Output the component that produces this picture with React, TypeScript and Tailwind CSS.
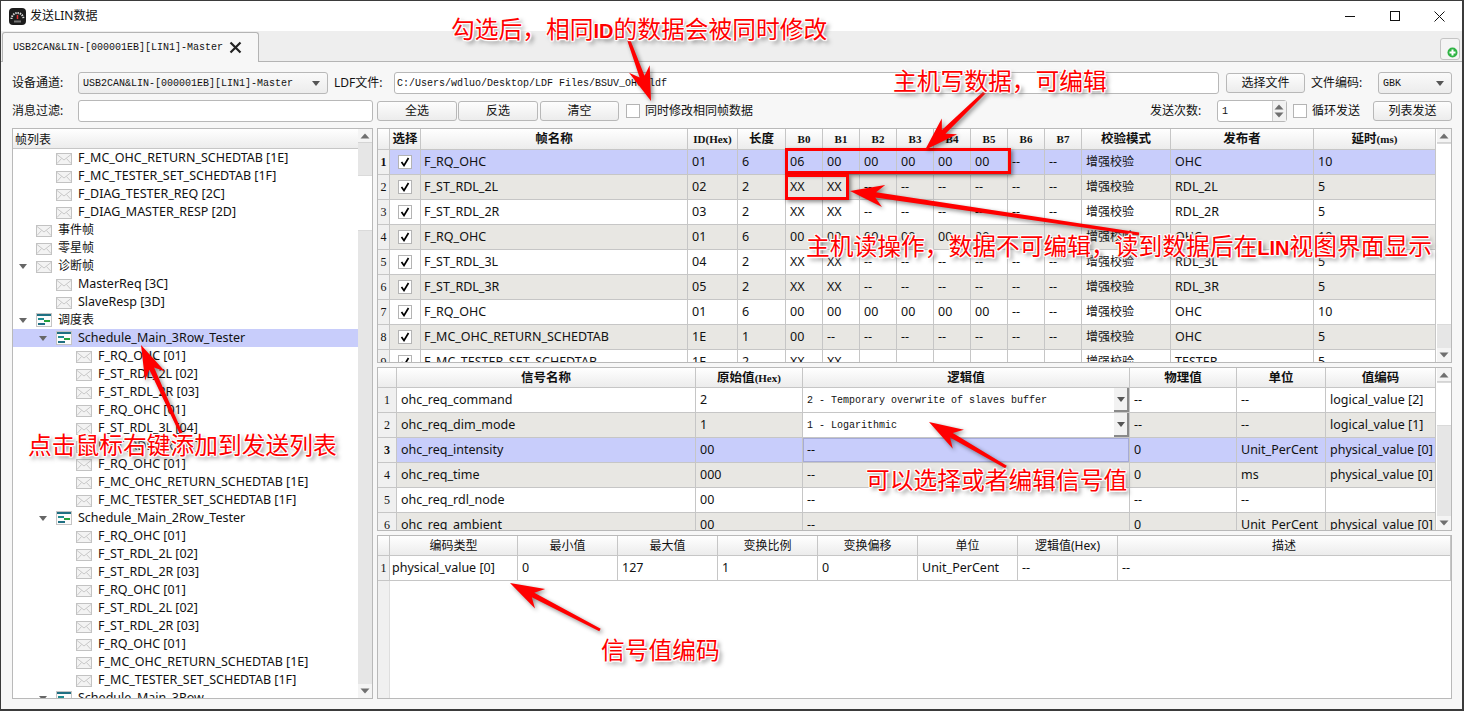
import React from "react";

const UI_FONT = "font-['Noto_Sans','Noto_Sans_CJK_SC',sans-serif]";
const MONO = "font-['Liberation_Mono','Noto_Sans_CJK_SC',monospace] text-[10px]";

type TreeRow = { level: number; icon: "mail" | "sched"; text: string; open?: boolean; selected?: boolean; cjk?: boolean };

const m = (level: number, text: string): TreeRow => ({ level, icon: "mail", text });

const TREE: TreeRow[] = [
  m(2, "F_MC_OHC_RETURN_SCHEDTAB [1E]"),
  m(2, "F_MC_TESTER_SET_SCHEDTAB [1F]"),
  m(2, "F_DIAG_TESTER_REQ [2C]"),
  m(2, "F_DIAG_MASTER_RESP [2D]"),
  { level: 1, icon: "mail", text: "事件帧", cjk: true },
  { level: 1, icon: "mail", text: "零星帧", cjk: true },
  { level: 1, icon: "mail", text: "诊断帧", open: true, cjk: true },
  m(2, "MasterReq [3C]"),
  m(2, "SlaveResp [3D]"),
  { level: 1, icon: "sched", text: "调度表", open: true, cjk: true },
  { level: 2, icon: "sched", text: "Schedule_Main_3Row_Tester", open: true, selected: true },
  m(3, "F_RQ_OHC [01]"),
  m(3, "F_ST_RDL_2L [02]"),
  m(3, "F_ST_RDL_2R [03]"),
  m(3, "F_RQ_OHC [01]"),
  m(3, "F_ST_RDL_3L [04]"),
  m(3, "F_ST_RDL_3R [05]"),
  m(3, "F_RQ_OHC [01]"),
  m(3, "F_MC_OHC_RETURN_SCHEDTAB [1E]"),
  m(3, "F_MC_TESTER_SET_SCHEDTAB [1F]"),
  { level: 2, icon: "sched", text: "Schedule_Main_2Row_Tester", open: true },
  m(3, "F_RQ_OHC [01]"),
  m(3, "F_ST_RDL_2L [02]"),
  m(3, "F_ST_RDL_2R [03]"),
  m(3, "F_RQ_OHC [01]"),
  m(3, "F_ST_RDL_2L [02]"),
  m(3, "F_ST_RDL_2R [03]"),
  m(3, "F_RQ_OHC [01]"),
  m(3, "F_MC_OHC_RETURN_SCHEDTAB [1E]"),
  m(3, "F_MC_TESTER_SET_SCHEDTAB [1F]"),
  { level: 2, icon: "sched", text: "Schedule_Main_3Row", open: true },
];

const LEVEL_PAD: Record<number, string> = { 1: "pl-[6px]", 2: "pl-[26px]", 3: "pl-[46px]" };

const FRAMES = [
  ["F_RQ_OHC", "01", "6", "06", "00", "00", "00", "00", "00", "--", "--", "OHC", "10"],
  ["F_ST_RDL_2L", "02", "2", "XX", "XX", "--", "--", "--", "--", "--", "--", "RDL_2L", "5"],
  ["F_ST_RDL_2R", "03", "2", "XX", "XX", "--", "--", "--", "--", "--", "--", "RDL_2R", "5"],
  ["F_RQ_OHC", "01", "6", "00", "00", "00", "00", "00", "00", "--", "--", "OHC", "10"],
  ["F_ST_RDL_3L", "04", "2", "XX", "XX", "--", "--", "--", "--", "--", "--", "RDL_3L", "5"],
  ["F_ST_RDL_3R", "05", "2", "XX", "XX", "--", "--", "--", "--", "--", "--", "RDL_3R", "5"],
  ["F_RQ_OHC", "01", "6", "00", "00", "00", "00", "00", "00", "--", "--", "OHC", "10"],
  ["F_MC_OHC_RETURN_SCHEDTAB", "1E", "1", "00", "--", "--", "--", "--", "--", "--", "--", "OHC", "5"],
  ["F_MC_TESTER_SET_SCHEDTAB", "1F", "2", "XX", "XX", "--", "--", "--", "--", "--", "--", "TESTER", "5"],
];

const SIGNALS = [
  ["ohc_req_command", "2", "2 - Temporary overwrite of slaves buffer", "--", "--", "logical_value [2]"],
  ["ohc_req_dim_mode", "1", "1 - Logarithmic", "--", "--", "logical_value [1]"],
  ["ohc_req_intensity", "00", "--", "0", "Unit_PerCent", "physical_value [0]"],
  ["ohc_req_time", "000", "--", "0", "ms", "physical_value [0]"],
  ["ohc_req_rdl_node", "00", "--", "--", "--", ""],
  ["ohc_req_ambient", "00", "--", "0", "Unit_PerCent", "physical_value [0]"],
];

const FRAME_COLS = "grid grid-cols-[12px_31px_267px_50px_48px_repeat(8,37px)_89px_143px_122px]";
const SIGNAL_COLS = "grid grid-cols-[19px_299px_107px_327px_107px_89px_110px]";
const CODE_COLS = "grid grid-cols-[12px_128px_100px_100px_100px_100px_100px_100px_333px]";

function rowBg(i: number, selected: boolean) {
  if (selected) return "bg-[#c8cdfb]";
  return i % 2 === 0 ? "bg-white" : "bg-[#e8e7e3]";
}

function Cell({ className = "", children }: { className?: string; children?: React.ReactNode }) {
  return (
    <div className={`flex items-center overflow-hidden whitespace-nowrap border-r border-b border-[#c6c6c6] pl-[4px] ${className}`}>
      {children}
    </div>
  );
}

function Head({ className = "", children }: { className?: string; children?: React.ReactNode }) {
  return (
    <div className={`flex items-center justify-center overflow-hidden whitespace-nowrap border-r border-b border-[#c6c6c6] bg-gradient-to-b from-white to-[#ececec] ${className}`}>
      {children}
    </div>
  );
}

function RowNum({ n, bold }: { n: number; bold?: boolean }) {
  return (
    <div className={`flex items-center justify-center border-r border-b border-[#c6c6c6] bg-[#f0f0f0] font-['Liberation_Serif',serif] text-[12px] ${bold ? "font-bold" : ""}`}>
      {n}
    </div>
  );
}

function Triangle({ dir }: { dir: "up" | "down" }) {
  return (
    <svg width="10" height="6" viewBox="0 0 10 6">
      <path d={dir === "up" ? "M5 0.5 9.5 5.5H0.5Z" : "M0.5 0.5H9.5L5 5.5Z"} fill="#6f6f6f" />
    </svg>
  );
}

function ScrollBar({ before, thumb }: { before: string; thumb: string }) {
  return (
    <div className="flex w-[14px] flex-none flex-col bg-[#e6e6e6]">
      <div className="flex h-[14px] flex-none items-center justify-center border-b border-[#d4d4d4] bg-[#f4f4f4]">
        <Triangle dir="up" />
      </div>
      <div className={`flex-none ${before}`} />
      <div className={`flex-none border-y border-[#dadada] bg-white ${thumb}`} />
      <div className="flex-1" />
      <div className="flex h-[14px] flex-none items-center justify-center bg-[#f4f4f4]">
        <Triangle dir="down" />
      </div>
    </div>
  );
}

function MailIcon() {
  return (
    <svg width="16" height="12" viewBox="0 0 16 12" className="mt-[2px] flex-none">
      <rect x="0.5" y="0.5" width="15" height="11" fill="#f3f3f3" stroke="#c2c2c2" />
      <path d="M1 1.5 8 7 15 1.5M1 10.5 5.5 5.5M15 10.5 10.5 5.5" fill="none" stroke="#c9c9c9" />
    </svg>
  );
}

function SchedIcon() {
  return (
    <svg width="16" height="14" viewBox="0 0 16 14" className="flex-none">
      <rect x="0.5" y="0.5" width="15" height="13" fill="#fbfbfb" stroke="#c4c4c4" />
      <rect x="1" y="1" width="14" height="2" fill="#1f6f82" />
      <rect x="2" y="5" width="6" height="2" fill="#1f8a8f" />
      <rect x="8" y="7" width="6" height="2" fill="#26a03c" />
      <rect x="2" y="10" width="7" height="2" fill="#1f6f82" />
    </svg>
  );
}

function TreeItem({ row }: { row: TreeRow }) {
  return (
    <div className={`flex h-[18px] flex-none items-center whitespace-nowrap ${LEVEL_PAD[row.level]} ${row.selected ? "bg-[#c8cdfb]" : ""}`}>
      <div className="flex w-[17px] flex-none items-center">
        {row.open && (
          <svg width="8" height="5" viewBox="0 0 8 5">
            <path d="M0 0H8L4 5Z" fill="#666" />
          </svg>
        )}
      </div>
      {row.icon === "mail" ? <MailIcon /> : <SchedIcon />}
      <span className={`ml-[6px] ${row.cjk ? "text-[12px]" : ""}`}>{row.text}</span>
    </div>
  );
}

function Btn({ className = "", children }: { className?: string; children: React.ReactNode }) {
  return (
    <div className={`flex h-[20px] flex-none items-center justify-center rounded-[3px] border border-[#b8b8b8] bg-gradient-to-b from-[#fdfdfd] to-[#ececec] text-[12px] ${className}`}>
      {children}
    </div>
  );
}

function Combo({ className = "", children }: { className?: string; children: React.ReactNode }) {
  return (
    <div className={`flex h-[22px] flex-none items-center justify-between rounded-[3px] border border-[#b8b8b8] bg-gradient-to-b from-[#fafafa] to-[#ececec] pl-[4px] pr-[7px] ${MONO} ${className}`}>
      <span>{children}</span>
      <svg width="8" height="5" viewBox="0 0 8 5">
        <path d="M0 0H8L4 5Z" fill="#555" />
      </svg>
    </div>
  );
}

function CheckBox({ checked }: { checked?: boolean }) {
  return (
    <div className="flex h-[14px] w-[14px] flex-none items-center justify-center border border-[#b4b4b4] bg-white">
      {checked && (
        <svg width="10" height="10" viewBox="0 0 10 10">
          <path d="M1.5 5 4 8.5 8.5 1" fill="none" stroke="#000" strokeWidth="1.7" />
        </svg>
      )}
    </div>
  );
}

function ComboCell({ text }: { text: string }) {
  return (
    <div className={`flex items-center justify-between border-r border-b border-[#c6c6c6] bg-white pl-[4px] ${MONO}`}>
      <span className="whitespace-nowrap">{text}</span>
      <div className="flex h-full w-[15px] flex-none items-center justify-center border-b-2 border-r-2 border-[#8a8a8a] bg-[#f2f2f2]">
        <svg width="8" height="5" viewBox="0 0 8 5">
          <path d="M0 0H8L4 5Z" fill="#555" />
        </svg>
      </div>
    </div>
  );
}

function FrameTable() {
  const headB = "font-['Liberation_Serif',serif] text-[11px] font-bold";
  const headC = "pt-[1px] text-[12.5px] font-bold";
  return (
    <div className="flex h-[235px] flex-none border border-[#b9b9b9] bg-white">
      <div className="w-[1058px] flex-none overflow-hidden">
        <div className={`${FRAME_COLS} h-[21px]`}>
          <Head />
          <Head className={headC}>选择</Head>
          <Head className={headC}>帧名称</Head>
          <Head className={headC}>
            <span className={headB}>ID(Hex)</span>
          </Head>
          <Head className={headC}>长度</Head>
          {["B0", "B1", "B2", "B3", "B4", "B5", "B6", "B7"].map((b) => (
            <Head key={b} className={headB}>
              {b}
            </Head>
          ))}
          <Head className={headC}>校验模式</Head>
          <Head className={headC}>发布者</Head>
          <Head className={headC}>
            延时<span className={headB}>(ms)</span>
          </Head>
        </div>
        {FRAMES.map((row, i) => {
          const bg = rowBg(i, i === 0);
          return (
            <div key={i} className={`${FRAME_COLS} h-[25px]`}>
              <RowNum n={i + 1} bold={i === 0} />
              <Cell className={`justify-center !pb-[1px] !pl-0 ${bg}`}>
                <CheckBox checked />
              </Cell>
              <Cell className={`!pl-[3px] ${bg}`}>{row[0]}</Cell>
              {row.slice(1, 11).map((v, j) => (
                <Cell key={j} className={bg}>
                  {v}
                </Cell>
              ))}
              <Cell className={`text-[12px] ${bg}`}>增强校验</Cell>
              <Cell className={bg}>{row[11]}</Cell>
              <Cell className={bg}>{row[12]}</Cell>
            </div>
          );
        })}
      </div>
      <div className="w-px flex-none bg-white" />
      <ScrollBar before="h-0" thumb="h-[182px]" />
    </div>
  );
}

function SignalTable() {
  const headC = "pt-[1px] text-[12.5px] font-bold";
  return (
    <div className="mt-[4px] flex h-[164px] flex-none border border-[#b9b9b9] bg-white">
      <div className="w-[1058px] flex-none overflow-hidden">
        <div className={`${SIGNAL_COLS} h-[20px]`}>
          <Head />
          <Head className={headC}>信号名称</Head>
          <Head className={headC}>
            原始值<span className="font-['Liberation_Serif',serif] text-[11px] font-bold">(Hex)</span>
          </Head>
          <Head className={headC}>逻辑值</Head>
          <Head className={headC}>物理值</Head>
          <Head className={headC}>单位</Head>
          <Head className={headC}>值编码</Head>
        </div>
        {SIGNALS.map((row, i) => {
          const bg = rowBg(i, i === 2);
          return (
            <div key={i} className={`${SIGNAL_COLS} h-[25px]`}>
              <RowNum n={i + 1} bold={i === 2} />
              <Cell className={bg}>{row[0]}</Cell>
              <Cell className={bg}>{row[1]}</Cell>
              {i < 2 ? (
                <ComboCell text={row[2]} />
              ) : (
                <Cell className={`${bg} ${i === 2 ? "shadow-[inset_0_0_0_1px_#a5aad8]" : ""}`}>{row[2]}</Cell>
              )}
              <Cell className={bg}>{row[3]}</Cell>
              <Cell className={bg}>{row[4]}</Cell>
              <Cell className={bg}>{row[5]}</Cell>
            </div>
          );
        })}
      </div>
      <div className="w-px flex-none bg-white" />
      <ScrollBar before="h-0" thumb="h-[44px]" />
    </div>
  );
}

function CodeTable() {
  const heads = ["编码类型", "最小值", "最大值", "变换比例", "变换偏移", "单位", "逻辑值(Hex)", "描述"];
  const values = ["physical_value [0]", "0", "127", "1", "0", "Unit_PerCent", "--", "--"];
  return (
    <div className="mt-[4px] flex h-[164px] flex-none flex-col border border-[#b9b9b9] bg-white">
      <div className={`${CODE_COLS} h-[20px] flex-none`}>
        <Head />
        {heads.map((h) => (
          <Head key={h} className="text-[12px]">
            {h}
          </Head>
        ))}
      </div>
      <div className={`${CODE_COLS} h-[25px] flex-none`}>
        <RowNum n={1} />
        {values.map((v, i) => (
          <Cell key={i} className={i === 0 ? "bg-white !pl-[2px]" : "bg-white"}>
            {v}
          </Cell>
        ))}
      </div>
      <div className="flex flex-1">
        <div className="w-[12px] border-r border-[#dedede] bg-[#f0f0f0]" />
      </div>
    </div>
  );
}

// Arrow made of a tapered tail and a barbed head, tip is the pointy end
function Arrow({ x1, y1, x2, y2 }: { x1: number; y1: number; x2: number; y2: number }) {
  const len = Math.hypot(x2 - x1, y2 - y1);
  const ux = (x2 - x1) / len;
  const uy = (y2 - y1) / len;
  const nx = -uy;
  const ny = ux;
  const p = (along: number, side: number) =>
    `${(x2 - ux * along + nx * side).toFixed(1)},${(y2 - uy * along + ny * side).toFixed(1)}`;
  const points = [p(0, 0), p(34, 11), p(26, 2.6), p(len, 1.5), p(len, -1.5), p(26, -2.6), p(34, -11)];
  return <polygon points={points.join(" ")} fill="#ff0000" />;
}

function Note({ className, children }: { className: string; children: React.ReactNode }) {
  return (
    <div
      className={`absolute whitespace-nowrap text-[23.75px] leading-[30px] text-[#ff0000] [text-shadow:1px_0_0_#fff,-1px_0_0_#fff,0_1px_0_#fff,0_-1px_0_#fff,1px_1px_1px_#fff,-1px_-1px_1px_#fff,1px_-1px_1px_#fff,-1px_1px_1px_#fff,3px_3px_4px_#777] ${className}`}
    >
      {children}
    </div>
  );
}

function Latin({ children }: { children: React.ReactNode }) {
  return <b className="font-['Liberation_Sans',sans-serif] text-[20px]">{children}</b>;
}

export default function App() {
  return (
    <div className={`relative h-[711px] w-[1464px] overflow-hidden bg-[#3b3b3b] pl-px pt-px text-[12.5px] text-[#111] ${UI_FONT}`}>
      <div className="flex h-[708px] w-[1461px] flex-col bg-[#f0f0f0]">
        {/* title bar */}
        <div className="flex h-[30px] flex-none items-center bg-white">
          <svg width="17" height="17" viewBox="0 0 17 17" className="ml-[8px] flex-none">
            <rect width="17" height="17" rx="4" fill="#1c1c1c" />
            <path d="M2.5 11a6 6 0 0 1 12 0" fill="none" stroke="#d8d8d8" strokeWidth="2" strokeDasharray="1.4 0.9" />
            <path d="M8.5 11V7" stroke="#e23030" strokeWidth="1.5" />
            <rect x="5" y="12.5" width="7" height="2" fill="#777" />
          </svg>
          <span className="ml-[4px] text-[12px]">发送LIN数据</span>
          <div className="ml-auto flex h-full">
            <div className="flex w-[45px] items-center justify-center">
              <svg width="10" height="10" viewBox="0 0 10 10">
                <path d="M0 5.5H10" stroke="#111" />
              </svg>
            </div>
            <div className="flex w-[45px] items-center justify-center">
              <svg width="10" height="10" viewBox="0 0 10 10">
                <rect x="0.5" y="0.5" width="9" height="9" fill="none" stroke="#111" />
              </svg>
            </div>
            <div className="flex w-[45px] items-center justify-center">
              <svg width="11" height="11" viewBox="0 0 11 11">
                <path d="M0.5 0.5 10.5 10.5M10.5 0.5 0.5 10.5" stroke="#111" />
              </svg>
            </div>
          </div>
        </div>

        {/* tab strip */}
        <div className="flex h-[31px] flex-none items-end border-b border-[#b4b4b4] bg-[#eeeeee]">
          <div className="-mb-px ml-px flex h-[30px] w-[257px] items-center rounded-t-[3px] border border-b-0 border-[#b4b4b4] bg-[#f7f7f7] pl-[10px]">
            <span className={MONO}>USB2CAN&amp;LIN-[000001EB][LIN1]-Master</span>
            <svg width="13" height="13" viewBox="0 0 13 13" className="ml-[6px]">
              <path d="M1.5 1.5 11.5 11.5M11.5 1.5 1.5 11.5" stroke="#222" strokeWidth="2.2" />
            </svg>
          </div>
          <div className="mb-px ml-auto mr-[2px] flex h-[22px] w-[20px] items-end justify-end rounded-[3px] border border-[#c4c4c4] bg-[#f4f4f4] p-px">
            <svg width="11" height="11" viewBox="0 0 11 11">
              <circle cx="5.5" cy="5.5" r="5" fill="#2fb344" />
              <path d="M5.5 2.5V8.5M2.5 5.5H8.5" stroke="#fff" strokeWidth="2" />
            </svg>
          </div>
        </div>

        {/* toolbar */}
        <div className="flex flex-1 flex-col bg-[#f7f7f7] pl-[11px] pr-[10px] pt-[10px]">
          <div className="flex h-[22px] flex-none items-center">
            <span className="w-[66px] flex-none text-[12px]">设备通道:</span>
            <Combo className="w-[250px]">USB2CAN&amp;LIN-[000001EB][LIN1]-Master</Combo>
            <span className="ml-[6px] w-[60px] flex-none text-[12px]">LDF文件:</span>
            <div className={`flex h-[22px] w-[825px] flex-none items-center rounded-[3px] border border-[#b8b8b8] bg-white pl-[2px] ${MONO}`}>
              C:/Users/wdluo/Desktop/LDF Files/BSUV_OHC.ldf
            </div>
            <Btn className="ml-[7px] w-[79px]">选择文件</Btn>
            <span className="ml-[6px] w-[67px] flex-none text-[12px]">文件编码:</span>
            <Combo className="w-[74px]">GBK</Combo>
          </div>
          <div className="mt-[6px] flex h-[22px] flex-none items-center">
            <span className="w-[66px] flex-none text-[12px]">消息过滤:</span>
            <div className="h-[22px] w-[295px] flex-none rounded-[3px] border border-[#b8b8b8] bg-white" />
            <Btn className="ml-[4px] w-[80px]">全选</Btn>
            <Btn className="ml-[1px] w-[80px]">反选</Btn>
            <Btn className="ml-[2px] w-[79px]">清空</Btn>
            <div className="ml-[7px]">
              <CheckBox />
            </div>
            <span className="ml-[5px] text-[12px]">同时修改相同帧数据</span>
            <span className="ml-auto w-[67px] flex-none text-[12px]">发送次数:</span>
            <div className="flex h-[22px] w-[70px] flex-none items-center justify-between rounded-[3px] border border-[#b8b8b8] bg-white pl-[4px]">
              <span className={MONO}>1</span>
              <div className="flex h-full w-[14px] flex-col items-center justify-center gap-[2px] border-l border-[#cfcfcf] bg-[#f2f2f2]">
                <Triangle dir="up" />
                <Triangle dir="down" />
              </div>
            </div>
            <div className="ml-[6px]">
              <CheckBox />
            </div>
            <span className="ml-[5px] text-[12px]">循环发送</span>
            <Btn className="ml-[13px] w-[79px]">列表发送</Btn>
          </div>

          {/* splitter panes */}
          <div className="mt-[6px] flex flex-none">
            <div className="flex h-[571px] w-[361px] flex-none border border-[#b9b9b9] bg-white">
              <div className="flex min-w-0 flex-1 flex-col overflow-hidden">
                <div className="flex h-[20px] flex-none items-center border-b border-[#c6c6c6] bg-gradient-to-b from-white to-[#ececec] pl-[2px] pt-[2px] text-[12px]">
                  帧列表
                </div>
                {TREE.map((row, i) => (
                  <TreeItem key={i} row={row} />
                ))}
              </div>
              <ScrollBar before="h-[32px]" thumb="h-[56px]" />
            </div>
            <div className="ml-[4px] flex w-[1075px] flex-none flex-col">
              <FrameTable />
              <SignalTable />
              <CodeTable />
            </div>
          </div>
        </div>
      </div>

      {/* annotations drawn over the window */}
      <div className="absolute left-[785px] top-[148px] h-[26px] w-[226px] border-[3px] border-[#ff0000] shadow-[2px_2px_4px_rgba(0,0,0,0.45)]" />
      <div className="absolute left-[785px] top-[174px] h-[26px] w-[64px] border-[3px] border-[#ff0000] shadow-[2px_2px_4px_rgba(0,0,0,0.45)]" />
      <svg
        width="1464"
        height="711"
        viewBox="0 0 1464 711"
        className="absolute left-0 top-0 drop-shadow-[2px_2px_2px_rgba(0,0,0,0.45)]"
      >
        <Arrow x1={628} y1={38} x2={651} y2={101} />
        <Arrow x1={985} y1={92} x2={925} y2={150} />
        <Arrow x1={1139} y1={234} x2={850} y2={191} />
        <Arrow x1={181} y1={433} x2={141} y2={345} />
        <Arrow x1={1006} y1={467} x2={929} y2={422} />
        <Arrow x1={600} y1={630} x2={510} y2={583} />
      </svg>
      <Note className="left-[451px] top-[14px]">
        勾选后，相同<Latin>ID</Latin>的数据会被同时修改
      </Note>
      <Note className="left-[893px] top-[66px]">主机写数据，可编辑</Note>
      <Note className="left-[806px] top-[231px]">
        主机读操作，数据不可编辑，读到数据后在<Latin>LIN</Latin>视图界面显示
      </Note>
      <Note className="left-[28px] top-[430px]">点击鼠标右键添加到发送列表</Note>
      <Note className="left-[866px] top-[465px]">可以选择或者编辑信号值</Note>
      <Note className="left-[601px] top-[635px]">信号值编码</Note>
    </div>
  );
}
